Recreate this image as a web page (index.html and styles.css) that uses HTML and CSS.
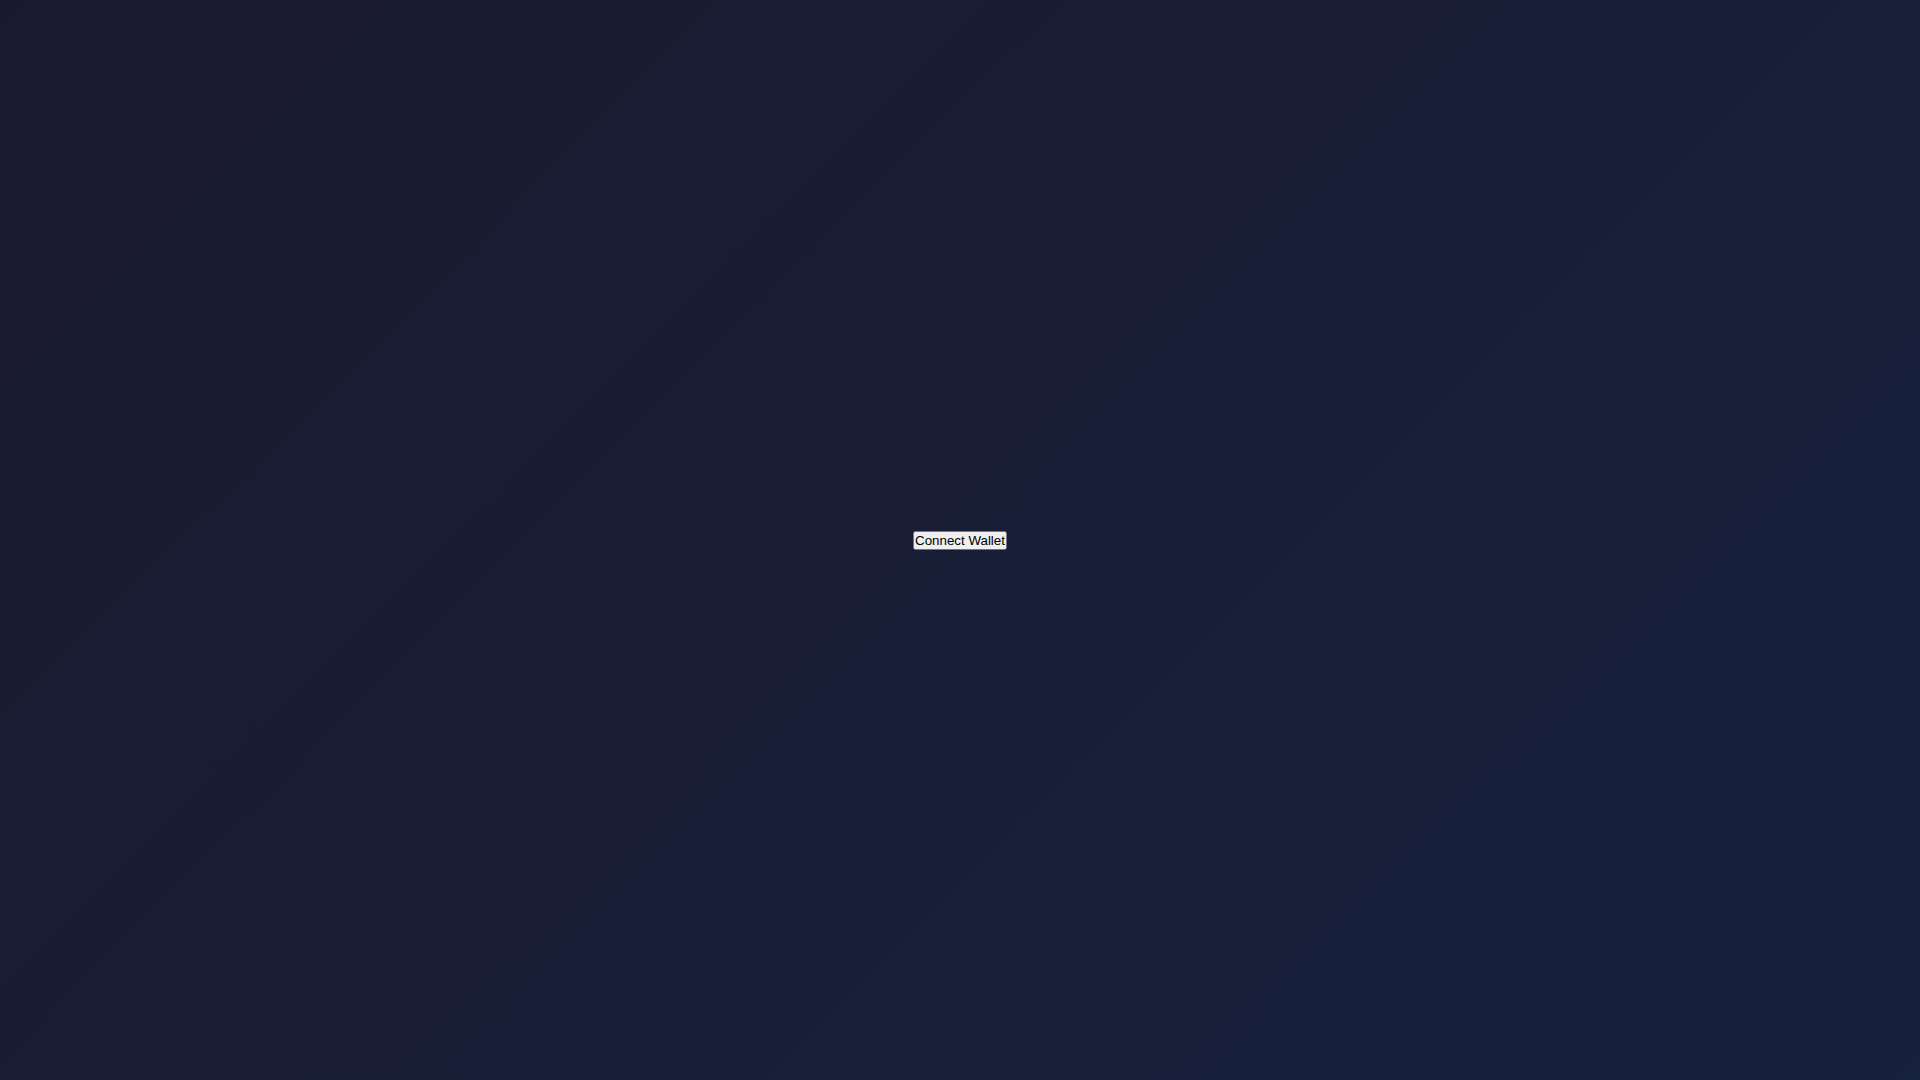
FILE: index.html
```html
<!DOCTYPE html>
<html lang="en">
<head>
<meta charset="utf-8">
<title>Connect Wallet</title>
<link rel="stylesheet" href="styles.css">
</head>
<body>
<main class="app">
  <button class="connect-btn" type="button">Connect Wallet</button>
</main>
</body>
</html>
```
FILE: styles.css
```css
html, body {
  margin: 0;
  padding: 0;
  height: 100%;
}
body {
  background: linear-gradient(135deg, #1a1a2e 0%, #16213e 100%);
  font-family: "Liberation Sans", Arial, sans-serif;
}
.app {
  min-height: 100vh;
  display: flex;
  align-items: center;
  justify-content: center;
}
.connect-btn {
  font-family: "Liberation Sans", Arial, sans-serif;
  font-size: 13.33px;
  padding: 0;
}
```
